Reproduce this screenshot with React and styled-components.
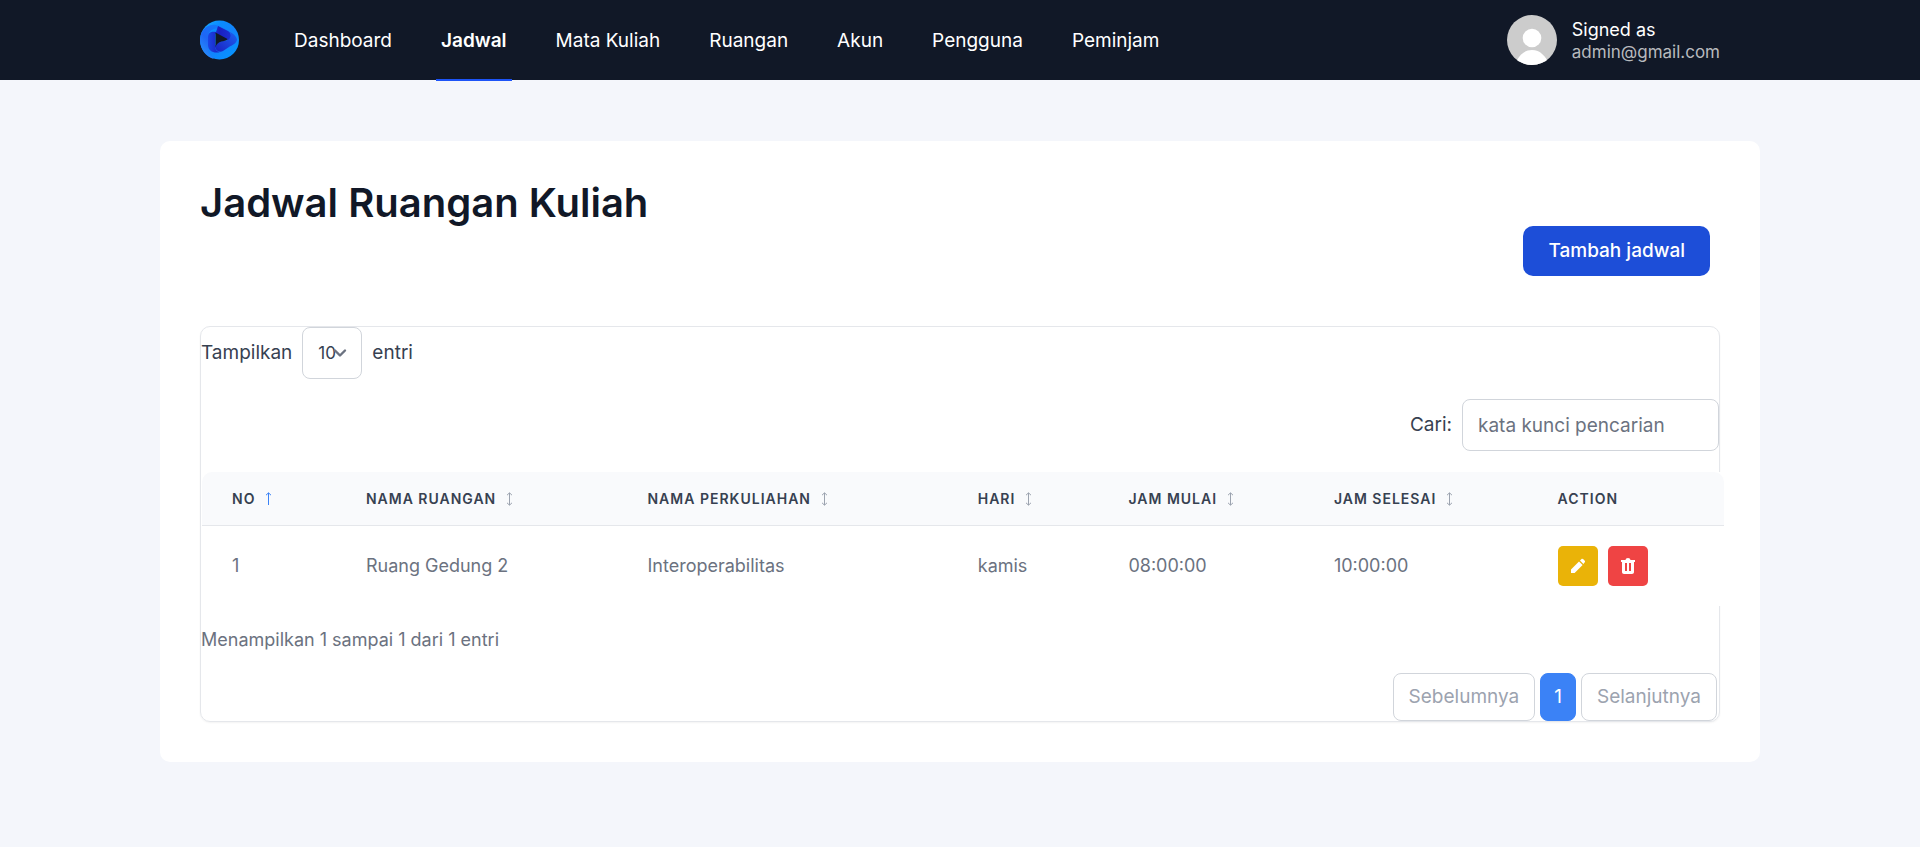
import React from "react";
import styled, { createGlobalStyle } from "styled-components";

const GlobalStyle = createGlobalStyle`
  *, *::before, *::after { box-sizing: border-box; }
  body {
    margin: 0;
    background: #f4f6fb;
    color: #111827;
    font-family: Inter, "Open Sans", sans-serif;
    font-size: 19px;
    line-height: 28px;
  }
  button, input, select { font: inherit; color: inherit; }
`;

const Header = styled.header`
  background: #111827;
`;

const HeaderInner = styled.div`
  display: flex;
  align-items: center;
  max-width: 1600px;
  height: 80px;
  margin: 0 auto;
  padding: 0 40px;
`;

const LogoLink = styled.a`
  display: flex;
  margin-right: 49px;
`;

const Nav = styled.nav`
  display: flex;
  flex: 1;
  gap: 39px;
  align-self: stretch;
`;

const NavLink = styled.a`
  position: relative;
  display: flex;
  align-items: center;
  padding: 2px 5px 0;
  color: #fff;
  font-weight: ${(p) => (p.$active ? 600 : 400)};
  text-decoration: none;

  &::after {
    content: "";
    display: ${(p) => (p.$active ? "block" : "none")};
    position: absolute;
    left: 0;
    right: 0;
    bottom: -1px;
    height: 2px;
    background: #1d54f7;
  }
`;

const Account = styled.div`
  display: flex;
  align-items: center;
  gap: 15px;
`;

const AccountText = styled.div`
  display: flex;
  flex-direction: column;
  padding-top: 2px;
  color: #fff;
  font-size: 18px;
  line-height: 23px;
`;

const Email = styled.span`
  color: #b8babe;
  font-size: 17px;
`;

const Card = styled.main`
  max-width: 1600px;
  margin: 61px auto 0;
  padding: 40px;
  border-radius: 10px;
  background: #fff;
`;

const Title = styled.h1`
  margin: 0;
  font-size: 40px;
  font-weight: 600;
  line-height: 44px;
`;

const Toolbar = styled.div`
  display: flex;
  justify-content: flex-end;
  margin: 1px 0 50px;
  padding-right: 10px;
`;

const PrimaryButton = styled.button`
  height: 50px;
  padding: 0 25px;
  border: 0;
  border-radius: 10px;
  background: #1d4ed8;
  color: #fff;
  font-weight: 500;
`;

const TablePanel = styled.section`
  border: 1px solid #e5e7eb;
  border-radius: 10px;
  box-shadow: 0 1px 2px rgba(0, 0, 0, 0.05);
`;

const ControlLabel = styled.label`
  display: flex;
  align-items: center;
  justify-content: ${(p) => (p.$end ? "flex-end" : "flex-start")};
  gap: 10px;
  margin-bottom: 20px;
  color: #374151;
`;

const SelectBox = styled.span`
  position: relative;
  display: flex;

  svg {
    position: absolute;
    top: 21px;
    left: 31px;
    pointer-events: none;
  }
`;

const Select = styled.select`
  appearance: none;
  width: 60px;
  height: 52px;
  padding: 0 15px;
  border: 1px solid #d1d5db;
  border-radius: 8px;
  background: #fff;
  font-size: 17px;
`;

const SearchInput = styled.input`
  width: 257px;
  height: 52px;
  padding: 0 15px;
  border: 1px solid #d1d5db;
  border-radius: 8px;
  background: #fff;

  &::placeholder { color: #6b7280; opacity: 1; }
`;

const TableWrap = styled.div`
  margin: 21px -5px 20px 1px;
  background: #fff;
`;

const Table = styled.table`
  width: 100%;
  table-layout: fixed;
  border-collapse: separate;
  border-spacing: 0;
  text-align: left;
`;

const Col = styled.col`
  width: ${(p) => p.$share}%;
`;

const HeadCell = styled.th`
  height: 54px;
  padding: 0 30px;
  border-bottom: 1px solid #e5e7eb;
  background: #f9fafc;
  color: #374151;
  font-size: 14px;
  font-weight: 600;
  letter-spacing: 1px;
  white-space: nowrap;

  &:first-child { border-top-left-radius: 10px; }
  &:last-child { border-top-right-radius: 10px; }
`;

const SortButton = styled.button`
  display: flex;
  align-items: center;
  gap: 10px;
  padding: 0;
  border: 0;
  background: none;
  letter-spacing: inherit;
`;

const Cell = styled.td`
  height: 80px;
  padding: 0 30px;
  color: #6b7280;
  font-size: 18px;
  white-space: nowrap;
`;

const Actions = styled.div`
  display: flex;
  gap: 10px;
`;

const ActionButton = styled.button`
  display: grid;
  place-items: center;
  width: 40px;
  height: 40px;
  padding: 0;
  border: 0;
  border-radius: 5px;
  background: ${(p) => p.$color};
`;

const Info = styled.p`
  margin: 0 0 19px;
  color: #6b7280;
  font-size: 18px;
`;

const Pagination = styled.nav`
  display: flex;
  justify-content: flex-end;
  gap: 5px;
  padding-right: 2px;
`;

const PageButton = styled.button`
  height: 48px;
  padding: 0 ${(p) => (p.$current ? 13 : 15)}px;
  border: 1px solid ${(p) => (p.$current ? "#3b82f6" : "#d1d5db")};
  border-radius: 8px;
  background: ${(p) => (p.$current ? "#3b82f6" : "#fff")};
  color: ${(p) => (p.$current ? "#fff" : "#9ca3af")};
`;

const Logo = () => (
  <svg width="40" height="40" viewBox="0 0 40 40" aria-hidden="true">
    <defs>
      <linearGradient id="ring" x1="0" y1="0" x2="1" y2="1">
        <stop offset="0" stopColor="#1db0ff" />
        <stop offset="0.3" stopColor="#0a8cff" />
        <stop offset="0.55" stopColor="#1283fc" />
        <stop offset="1" stopColor="#0399ff" />
      </linearGradient>
      <linearGradient id="band" x1="0" y1="1" x2="1" y2="0">
        <stop offset="0" stopColor="#2b9dfd" />
        <stop offset="0.4" stopColor="#1e66f5" />
        <stop offset="1" stopColor="#0a86ff" />
      </linearGradient>
      <linearGradient id="core" x1="0" y1="0" x2="1" y2="0">
        <stop offset="0" stopColor="#1b45e6" />
        <stop offset="0.5" stopColor="#1a20c0" />
        <stop offset="1" stopColor="#1b2fd2" />
      </linearGradient>
      <linearGradient id="fold" x1="0" y1="1" x2="1" y2="0">
        <stop offset="0" stopColor="#1a20c0" />
        <stop offset="1" stopColor="#1d62f2" />
      </linearGradient>
    </defs>
    <circle cx="19.5" cy="20" r="19.5" fill="url(#ring)" />
    <path d="M2 12C5 7 10 4 16 5c6 2 12 5 17 9-3-1-6-3-9-4-7-4-16-1-16 8v9c0 5 2 9 6 12C6 37 0 29 0 20c0-3 1-6 2-8z" fill="url(#band)" />
    <path d="M8 17c0-5 4-6 8-5l2-6 10 5c4 2 4 8 0 10l-2-2-9-5c-1-1-2 0-2 1v11c0 3 2 6 5 6-6 2-12-1-12-7z" fill="url(#core)" />
    <path d="M30 12c4 2 7 5 7 8-1 4-5 5-8 7l-6 4c-4 2-8-1-8-5 2-3 5-5 9-5 5 0 8-4 6-9z" fill="url(#fold)" />
    <path d="M15.500 12.500l12 6.500c-1 2-4 2-6 2.500-3 .8-5 2.500-6 5.500z" fill="#111827" />
  </svg>
);

const Avatar = () => (
  <svg width="50" height="50" viewBox="0 0 50 50" role="img" aria-label="Avatar">
    <defs>
      <clipPath id="avatar-circle"><circle cx="25" cy="25" r="25" /></clipPath>
    </defs>
    <g clipPath="url(#avatar-circle)">
      <rect width="50" height="50" fill="#ccc" />
      <circle cx="25" cy="23" r="9.3" fill="#fff" />
      <path d="M8 50c3-9 9-15 17-15s14 6 17 15z" fill="#fff" />
    </g>
  </svg>
);

const Chevron = () => (
  <svg width="14" height="10" viewBox="0 0 14 10" aria-hidden="true">
    <path d="M2 2.500l5 5 5-5" fill="none" stroke="#6b7280" strokeWidth="2.4" strokeLinecap="round" strokeLinejoin="round" />
  </svg>
);

const SortIcon = ({ active }) => (
  <svg width="7" height="14" viewBox="0 0 7 14" fill="none" stroke={active ? "#3b82f6" : "#9ca3af"} aria-hidden="true">
    <path d="M3.500 1v12M1 3.200 3.500.8 6 3.200" />
    {!active && <path d="M1 10.800l2.500 2.400L6 10.800" />}
  </svg>
);

const PencilIcon = () => (
  <svg width="16" height="16" viewBox="0 0 16 16" fill="#fff" aria-hidden="true">
    <path d="M1 15v-3.600l8-8L12.600 7l-8 8zM10 2.600l1.300-1.300c.7-.7 1.600-.5 2.300.2l.9.9c.7.700.7 1.500 0 2.200L13.400 5.900z" />
  </svg>
);

const TrashIcon = () => (
  <svg width="16" height="16" viewBox="0 0 16 16" fill="#fff" fillRule="evenodd" aria-hidden="true">
    <path d="M1 2h4.500C5.700.800 6.500 0 8 0s2.300.8 2.500 2H15v2h-1v10c0 1.200-.8 2-2 2H4c-1.200 0-2-.8-2-2V4H1zM5 5v8h2V5zM9 5v8h2V5z" />
  </svg>
);

const links = ["Dashboard", "Jadwal", "Mata Kuliah", "Ruangan", "Akun", "Pengguna", "Peminjam"];

const columns = [
  { label: "NO", share: 8.8, sort: "ascending" },
  { label: "NAMA RUANGAN", share: 18.5, sort: "none" },
  { label: "NAMA PERKULIAHAN", share: 21.7, sort: "none" },
  { label: "HARI", share: 9.9, sort: "none" },
  { label: "JAM MULAI", share: 13.5, sort: "none" },
  { label: "JAM SELESAI", share: 14.7, sort: "none" },
  { label: "ACTION", share: 12.9 },
];

const rows = [["1", "Ruang Gedung 2", "Interoperabilitas", "kamis", "08:00:00", "10:00:00"]];

export default function App() {
  return (
    <>
      <GlobalStyle />
      <Header>
        <HeaderInner>
          <LogoLink href="#" aria-label="Beranda"><Logo /></LogoLink>
          <Nav>
            {links.map((name) => (
              <NavLink key={name} href="#" $active={name === "Jadwal"}>{name}</NavLink>
            ))}
          </Nav>
          <Account>
            <Avatar />
            <AccountText>
              <span>Signed as</span>
              <Email>admin@gmail.com</Email>
            </AccountText>
          </Account>
        </HeaderInner>
      </Header>
      <Card>
        <Title>Jadwal Ruangan Kuliah</Title>
        <Toolbar><PrimaryButton type="button">Tambah jadwal</PrimaryButton></Toolbar>
        <TablePanel>
          <ControlLabel htmlFor="page-size">
            Tampilkan
            <SelectBox>
              <Select id="page-size" defaultValue="10">
                <option>10</option>
                <option>25</option>
                <option>50</option>
              </Select>
              <Chevron />
            </SelectBox>
            entri
          </ControlLabel>
          <ControlLabel $end htmlFor="search">
            Cari:
            <SearchInput id="search" type="search" placeholder="kata kunci pencarian" />
          </ControlLabel>
          <TableWrap>
            <Table>
              <colgroup>
                {columns.map((c) => <Col key={c.label} $share={c.share} />)}
              </colgroup>
              <thead>
                <tr>
                  {columns.map((c) => (
                    <HeadCell key={c.label} scope="col" aria-sort={c.sort}>
                      {c.sort ? (
                        <SortButton type="button">
                          {c.label}
                          <SortIcon active={c.sort === "ascending"} />
                        </SortButton>
                      ) : c.label}
                    </HeadCell>
                  ))}
                </tr>
              </thead>
              <tbody>
                {rows.map((row) => (
                  <tr key={row[0]}>
                    {row.map((value, i) => <Cell key={columns[i].label}>{value}</Cell>)}
                    <Cell>
                      <Actions>
                        <ActionButton type="button" $color="#eab308" aria-label="Ubah"><PencilIcon /></ActionButton>
                        <ActionButton type="button" $color="#ef4444" aria-label="Hapus"><TrashIcon /></ActionButton>
                      </Actions>
                    </Cell>
                  </tr>
                ))}
              </tbody>
            </Table>
          </TableWrap>
          <Info>Menampilkan 1 sampai 1 dari 1 entri</Info>
          <Pagination aria-label="Halaman">
            <PageButton type="button">Sebelumnya</PageButton>
            <PageButton type="button" $current aria-current="page">1</PageButton>
            <PageButton type="button">Selanjutnya</PageButton>
          </Pagination>
        </TablePanel>
      </Card>
    </>
  );
}
